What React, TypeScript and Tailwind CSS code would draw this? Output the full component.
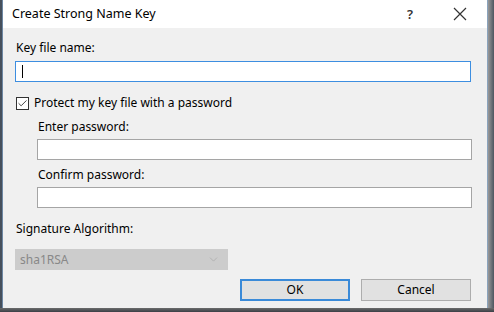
import { Check, ChevronDown } from 'lucide-react';

const font = { fontFamily: '"Segoe UI", "Noto Sans", "Open Sans", sans-serif' };

function TextBox({ focused, caret }: { focused?: boolean; caret?: boolean }) {
  return (
    <div
      className={`flex h-[21px] items-center bg-white px-[6px] ${
        focused ? 'border border-[#3d8ee0]' : 'border border-[#a5a5a5]'
      }`}
    >
      {caret && <div className="h-[13px] w-px bg-black" />}
    </div>
  );
}

export default function App() {
  return (
    <div className="flex h-[312px] w-[494px] flex-col overflow-hidden bg-[#3f4650]" style={font}>
      <div className="flex h-[308px]">
        <div className="w-[2px] bg-[#46505c]" />
        <div className="flex w-[485px] flex-col border-l border-[#6d87a3] bg-[#f0f0f0] text-[12px] leading-[16px] text-black">
          {/* title bar */}
          <div className="flex h-[28px] items-center bg-white pl-[9px]">
            <span className="text-[12.5px] text-black">Create Strong Name Key</span>
            <div className="ml-auto flex items-center">
              <span className="mr-[40px] text-[13px] font-semibold text-[#333]">?</span>
              <svg width="14" height="14" viewBox="0 0 14 14" className="mr-[20px]">
                <path d="M1 1 L13 13 M13 1 L1 13" stroke="#333" strokeWidth="1.2" />
              </svg>
            </div>
          </div>

          <div className="flex flex-col pl-[12px] pr-[16px]">
            <div className="mt-[12px] pl-[1px]">Key file name:</div>
            <div className="mt-[5px]">
              <TextBox focused caret />
            </div>

            <div className="mt-[13px] flex h-[16px] items-center pl-[1px]">
              <div className="flex h-[13px] w-[13px] items-center justify-center border border-[#333] bg-white">
                <Check size={11} strokeWidth={2} className="text-[#333]" />
              </div>
              <span className="ml-[5px]">Protect my key file with a password</span>
            </div>

            <div className="pl-[22px]">
              <div className="mt-[8px] pl-[1px]">Enter password:</div>
              <div className="mt-[4px] mr-[-1px]">
                <TextBox />
              </div>
              <div className="mt-[7px] pl-[1px]">Confirm password:</div>
              <div className="mt-[4px] mr-[-1px]">
                <TextBox />
              </div>
            </div>

            <div className="mt-[13px] pl-[1px]">Signature Algorithm:</div>
            <div className="mt-[12px] flex h-[21px] w-[213px] items-center border border-[#cccccc] bg-[#cccccc] pl-[4px] pr-[7px] text-[#888888]">
              <span>sha1RSA</span>
              <ChevronDown size={13} strokeWidth={1.3} className="ml-auto text-[#a8a8a8]" />
            </div>

            <div className="mt-[9px] flex justify-end gap-[11px]">
              <button className="flex h-[22px] w-[110px] items-center justify-center border-2 border-[#3a8ad8] bg-[#e1e1e1] text-black">
                OK
              </button>
              <button className="flex h-[22px] w-[110px] items-center justify-center border border-[#adadad] bg-[#e1e1e1] text-black">
                Cancel
              </button>
            </div>
          </div>
        </div>
        <div className="flex flex-1">
          <div className="w-px bg-[#8aa3bd]" />
          <div className="flex-1 bg-gradient-to-r from-[#9a9a9a] to-[#4e5660]" />
        </div>
      </div>
      <div className="h-[4px] bg-gradient-to-b from-[#6c6c6c] to-[#3a3f46]" />
    </div>
  );
}
